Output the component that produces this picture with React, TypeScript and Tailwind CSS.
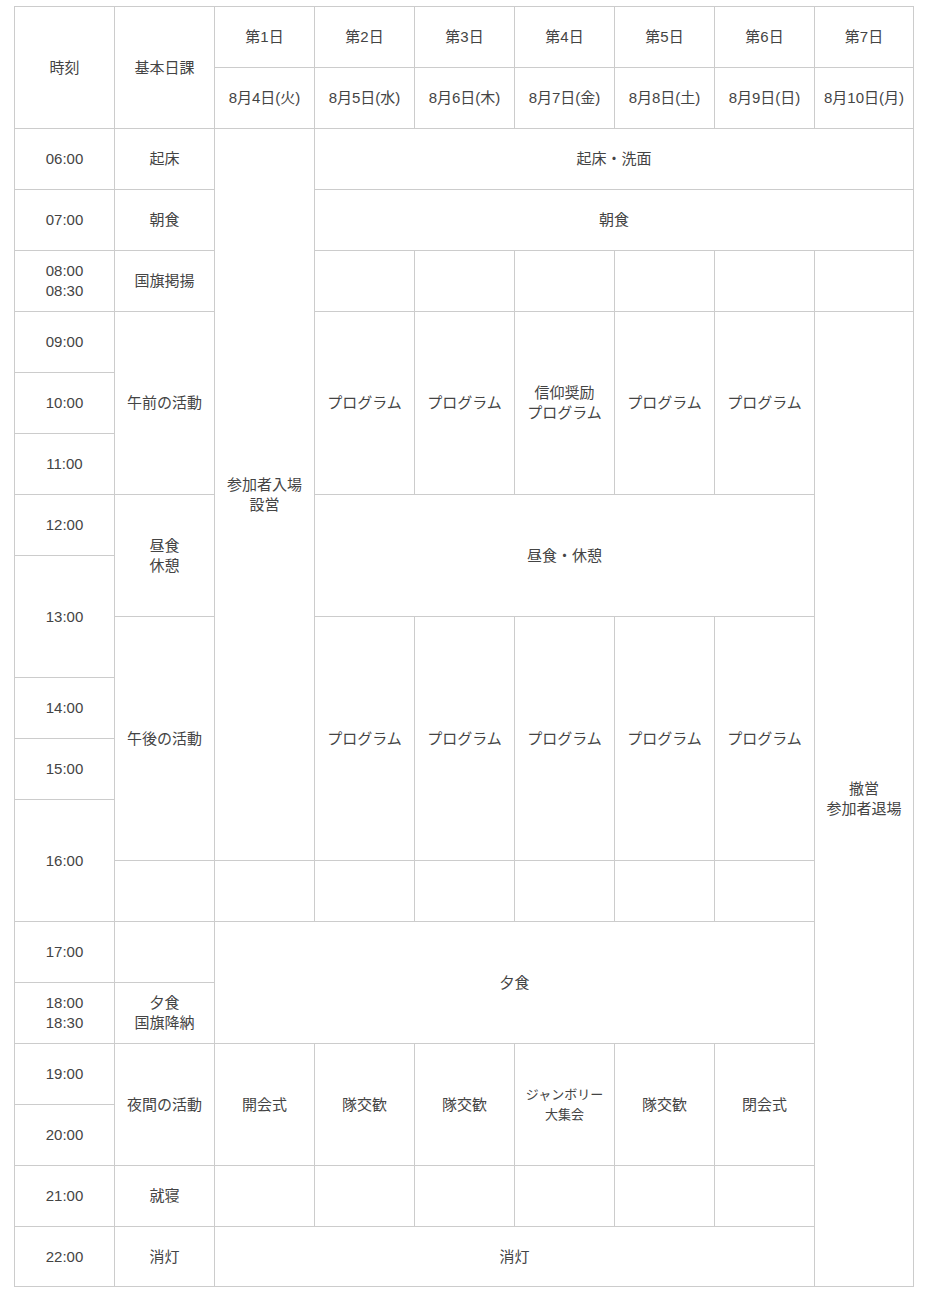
import React from "react";

type CellProps = {
  children?: React.ReactNode;
  rowSpan?: number;
  colSpan?: number;
  small?: boolean;
};

const Td: React.FC<CellProps> = ({ children, rowSpan, colSpan, small }) => (
  <td
    rowSpan={rowSpan}
    colSpan={colSpan}
    className={`border border-[#cccccc] text-center align-middle px-1 leading-5 ${small ? "text-[13px]" : "text-[15px]"}`}
  >
    {children}
  </td>
);

const Lines = ({ a, b }: { a: string; b: string }) => (
  <>
    {a}
    <br />
    {b}
  </>
);

const days = ["第1日", "第2日", "第3日", "第4日", "第5日", "第6日", "第7日"];
const dates = ["8月4日(火)", "8月5日(水)", "8月6日(木)", "8月7日(金)", "8月8日(土)", "8月9日(日)", "8月10日(月)"];

const Empty = ({ n }: { n: number }) => (
  <>
    {Array.from({ length: n }).map((_, i) => (
      <Td key={i} />
    ))}
  </>
);

export default function App() {
  return (
    <div className="bg-white min-h-[1293px] pt-[6px] pl-[14px]">
      <table
        className="table-fixed border-collapse w-[899px] text-[#444444]"
        style={{ fontFamily: '"Liberation Sans", Arial, "Noto Sans CJK JP", sans-serif' }}
      >
        <colgroup>
          {Array.from({ length: 9 }).map((_, i) => (
            <col key={i} className={i === 8 ? "w-[99px]" : "w-[100px]"} />
          ))}
        </colgroup>
        <tbody>
          <tr className="h-[61px]">
            <Td rowSpan={2}>時刻</Td>
            <Td rowSpan={2}>基本日課</Td>
            {days.map((d) => (
              <Td key={d}>{d}</Td>
            ))}
          </tr>
          <tr className="h-[61px]">
            {dates.map((d) => (
              <Td key={d}>{d}</Td>
            ))}
          </tr>
          {/* 06:00 */}
          <tr className="h-[61px]">
            <Td>06:00</Td>
            <Td>起床</Td>
            <Td rowSpan={12}>
              <Lines a="参加者入場" b="設営" />
            </Td>
            <Td colSpan={6}>起床・洗面</Td>
          </tr>
          {/* 07:00 */}
          <tr className="h-[61px]">
            <Td>07:00</Td>
            <Td>朝食</Td>
            <Td colSpan={6}>朝食</Td>
          </tr>
          {/* 08:00 */}
          <tr className="h-[61px]">
            <Td>
              <Lines a="08:00" b="08:30" />
            </Td>
            <Td>国旗掲揚</Td>
            <Empty n={6} />
          </tr>
          {/* 09:00 */}
          <tr className="h-[61px]">
            <Td>09:00</Td>
            <Td rowSpan={3}>午前の活動</Td>
            <Td rowSpan={3}>プログラム</Td>
            <Td rowSpan={3}>プログラム</Td>
            <Td rowSpan={3}>
              <Lines a="信仰奨励" b="プログラム" />
            </Td>
            <Td rowSpan={3}>プログラム</Td>
            <Td rowSpan={3}>プログラム</Td>
            <Td rowSpan={16}>
              <Lines a="撤営" b="参加者退場" />
            </Td>
          </tr>
          <tr className="h-[61px]">
            <Td>10:00</Td>
          </tr>
          <tr className="h-[61px]">
            <Td>11:00</Td>
          </tr>
          {/* 12:00 */}
          <tr className="h-[61px]">
            <Td>12:00</Td>
            <Td rowSpan={2}>
              <Lines a="昼食" b="休憩" />
            </Td>
            <Td rowSpan={2} colSpan={5}>
              昼食・休憩
            </Td>
          </tr>
          <tr className="h-[61px]">
            <Td rowSpan={2}>13:00</Td>
          </tr>
          {/* afternoon */}
          <tr className="h-[61px]">
            <Td rowSpan={4}>午後の活動</Td>
            <Td rowSpan={4}>プログラム</Td>
            <Td rowSpan={4}>プログラム</Td>
            <Td rowSpan={4}>プログラム</Td>
            <Td rowSpan={4}>プログラム</Td>
            <Td rowSpan={4}>プログラム</Td>
          </tr>
          <tr className="h-[61px]">
            <Td>14:00</Td>
          </tr>
          <tr className="h-[61px]">
            <Td>15:00</Td>
          </tr>
          <tr className="h-[61px]">
            <Td rowSpan={2}>16:00</Td>
          </tr>
          <tr className="h-[61px]">
            <Empty n={7} />
          </tr>
          {/* 17:00 */}
          <tr className="h-[61px]">
            <Td>17:00</Td>
            <Td />
            <Td rowSpan={2} colSpan={6}>
              夕食
            </Td>
          </tr>
          <tr className="h-[61px]">
            <Td>
              <Lines a="18:00" b="18:30" />
            </Td>
            <Td>
              <Lines a="夕食" b="国旗降納" />
            </Td>
          </tr>
          {/* night */}
          <tr className="h-[61px]">
            <Td>19:00</Td>
            <Td rowSpan={2}>夜間の活動</Td>
            <Td rowSpan={2}>開会式</Td>
            <Td rowSpan={2}>隊交歓</Td>
            <Td rowSpan={2}>隊交歓</Td>
            <Td rowSpan={2} small>
              <Lines a="ジャンボリー" b="大集会" />
            </Td>
            <Td rowSpan={2}>隊交歓</Td>
            <Td rowSpan={2}>閉会式</Td>
          </tr>
          <tr className="h-[61px]">
            <Td>20:00</Td>
          </tr>
          <tr className="h-[61px]">
            <Td>21:00</Td>
            <Td>就寝</Td>
            <Empty n={6} />
          </tr>
          <tr className="h-[60px]">
            <Td>22:00</Td>
            <Td>消灯</Td>
            <Td colSpan={6}>消灯</Td>
          </tr>
        </tbody>
      </table>
    </div>
  );
}
